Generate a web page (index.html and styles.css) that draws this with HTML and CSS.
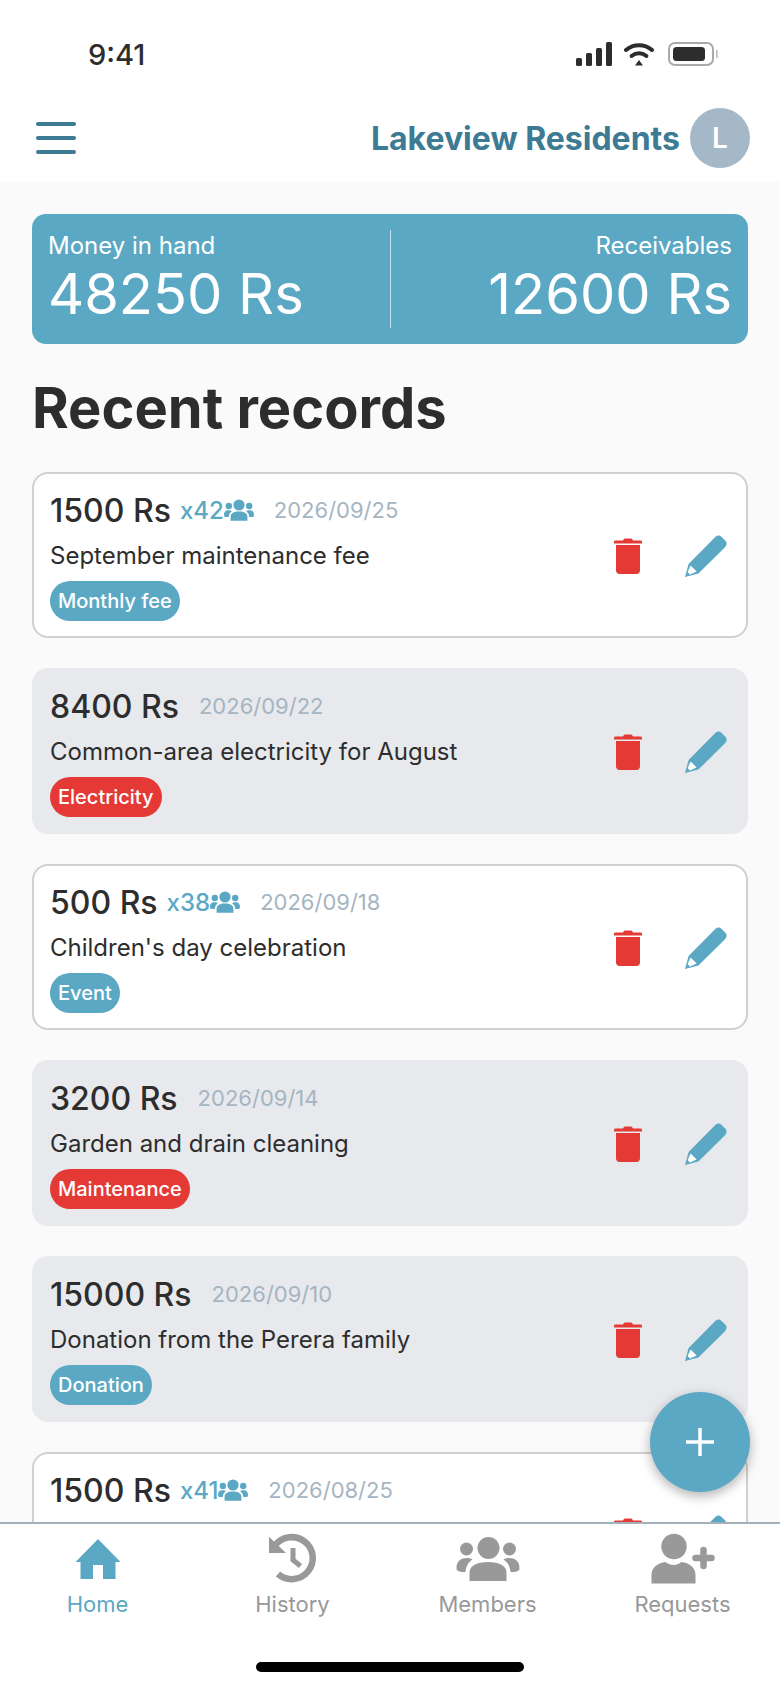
FILE: index.html
```html
<!DOCTYPE html>
<html lang="en">
<head>
    <meta charset="UTF-8">
    <meta name="viewport" content="width=device-width, initial-scale=1.0">
    <title>Lakeview Residents - Home</title>
    <link rel="stylesheet" href="styles.css">
</head>
<body>

    <!-- Shared icons -->
    <svg class="icon-defs" aria-hidden="true">
        <symbol id="i-trash" viewBox="0 0 28 36">
            <path d="M9 2.5 C9.4 1 10.5 0.4 11.5 0.4 H16.5 C17.5 0.4 18.6 1 19 2.5 H26.5 C27.5 2.5 28 3.2 28 4 V5.6 H0 V4 C0 3.2 0.5 2.5 1.5 2.5 Z"/>
            <path d="M2 7 H26 V32 C26 34.4 24.6 36 22.4 36 H5.6 C3.4 36 2 34.4 2 32 Z"/>
        </symbol>
        <symbol id="i-pencil" viewBox="0 0 44 44">
            <path d="M1 43 L4.6 30 L31 3.2 C33 1.2 35.6 1 37.6 3 L41.2 6.6 C43.2 8.6 43 11.2 41 13.2 L14.4 39.6 Z"/>
            <path class="pencil-tip" d="M3.6 38 L6.6 31.4 L12.6 37.4 L6 40.4 Z"/>
        </symbol>
        <symbol id="i-users" viewBox="0 0 30 22">
            <circle cx="15" cy="6" r="5.6"/>
            <circle cx="4.8" cy="7" r="3.2"/>
            <circle cx="25.2" cy="7" r="3.2"/>
            <path d="M6.6 21.8 V18 C6.6 14.6 9.6 12.6 15 12.6 C20.4 12.6 23.4 14.6 23.4 18 V21.8 Z"/>
            <path d="M0 16 C0 12.6 2 11.2 4.6 11.2 C6 11.2 7 11.6 7.8 12.2 C5.8 13.6 4.8 15.6 4.8 18 H1.6 C0.6 18 0 17.2 0 16 Z"/>
            <path d="M30 16 C30 12.6 28 11.2 25.4 11.2 C24 11.2 23 11.6 22.2 12.2 C24.2 13.6 25.2 15.6 25.2 18 H28.4 C29.4 18 30 17.2 30 16 Z"/>
        </symbol>
    </svg>

    <div class="phone">

        <!-- Status bar -->
        <div class="status-bar">
            <span class="status-time">9:41</span>
            <div class="status-icons">
                <svg class="status-signal" width="36" height="24" viewBox="0 0 36 24">
                    <rect x="0" y="16" width="6" height="8" rx="1.5"/>
                    <rect x="10" y="11" width="6" height="13" rx="1.5"/>
                    <rect x="20" y="6" width="6" height="18" rx="1.5"/>
                    <rect x="30" y="0" width="6" height="24" rx="1.5"/>
                </svg>
                <svg class="status-wifi" width="30" height="24" viewBox="0 0 30 24">
                    <path d="M2 8 C9.5 1.6 20.5 1.6 28 8" />
                    <path d="M7.6 14 C12 10.4 18 10.4 22.4 14" />
                    <path class="wifi-dot" d="M15 18 L19 23.6 H11 Z"/>
                </svg>
                <svg class="status-battery" width="50" height="24" viewBox="0 0 50 24">
                    <rect class="battery-case" x="1" y="1" width="44" height="22" rx="6"/>
                    <rect x="5" y="5" width="32" height="14" rx="3.5"/>
                    <rect class="battery-cap" x="48" y="8" width="1.6" height="8"/>
                </svg>
            </div>
        </div>

        <!-- Navigation Bar -->
        <header class="app-bar">
            <button class="menu-button" aria-label="Menu">
                <span></span><span></span><span></span>
            </button>
            <div class="group-info">
                <span class="group-name">Lakeview Residents</span>
                <span class="group-avatar">L</span>
            </div>
        </header>

        <main class="content">
            <section class="summary">
                <div class="summary-col">
                    <span class="summary-label">Money in hand</span>
                    <span class="summary-value">48250 Rs</span>
                </div>
                <div class="summary-col summary-right">
                    <span class="summary-label">Receivables</span>
                    <span class="summary-value">12600 Rs</span>
                </div>
            </section>

            <h1 class="section-title">Recent records</h1>

            <div class="records">
                <article class="record">
                    <div class="record-info">
                        <div class="record-head">
                            <span class="record-amount">1500 Rs</span>
                            <span class="record-count">x42<svg class="users-icon"><use href="#i-users"/></svg></span>
                            <span class="record-date">2026/09/25</span>
                        </div>
                        <p class="record-desc">September maintenance fee</p>
                        <span class="tag">Monthly fee</span>
                    </div>
                    <div class="record-actions">
                        <svg class="trash-icon"><use href="#i-trash"/></svg>
                        <svg class="pencil-icon"><use href="#i-pencil"/></svg>
                    </div>
                </article>

                <article class="record record-shared">
                    <div class="record-info">
                        <div class="record-head">
                            <span class="record-amount">8400 Rs</span>
                            <span class="record-date">2026/09/22</span>
                        </div>
                        <p class="record-desc">Common-area electricity for August</p>
                        <span class="tag tag-red">Electricity</span>
                    </div>
                    <div class="record-actions">
                        <svg class="trash-icon"><use href="#i-trash"/></svg>
                        <svg class="pencil-icon"><use href="#i-pencil"/></svg>
                    </div>
                </article>

                <article class="record">
                    <div class="record-info">
                        <div class="record-head">
                            <span class="record-amount">500 Rs</span>
                            <span class="record-count">x38<svg class="users-icon"><use href="#i-users"/></svg></span>
                            <span class="record-date">2026/09/18</span>
                        </div>
                        <p class="record-desc">Children's day celebration</p>
                        <span class="tag">Event</span>
                    </div>
                    <div class="record-actions">
                        <svg class="trash-icon"><use href="#i-trash"/></svg>
                        <svg class="pencil-icon"><use href="#i-pencil"/></svg>
                    </div>
                </article>

                <article class="record record-shared">
                    <div class="record-info">
                        <div class="record-head">
                            <span class="record-amount">3200 Rs</span>
                            <span class="record-date">2026/09/14</span>
                        </div>
                        <p class="record-desc">Garden and drain cleaning</p>
                        <span class="tag tag-red">Maintenance</span>
                    </div>
                    <div class="record-actions">
                        <svg class="trash-icon"><use href="#i-trash"/></svg>
                        <svg class="pencil-icon"><use href="#i-pencil"/></svg>
                    </div>
                </article>

                <article class="record record-shared">
                    <div class="record-info">
                        <div class="record-head">
                            <span class="record-amount">15000 Rs</span>
                            <span class="record-date">2026/09/10</span>
                        </div>
                        <p class="record-desc">Donation from the Perera family</p>
                        <span class="tag">Donation</span>
                    </div>
                    <div class="record-actions">
                        <svg class="trash-icon"><use href="#i-trash"/></svg>
                        <svg class="pencil-icon"><use href="#i-pencil"/></svg>
                    </div>
                </article>

                <article class="record">
                    <div class="record-info">
                        <div class="record-head">
                            <span class="record-amount">1500 Rs</span>
                            <span class="record-count">x41<svg class="users-icon"><use href="#i-users"/></svg></span>
                            <span class="record-date">2026/08/25</span>
                        </div>
                    </div>
                    <div class="record-actions">
                        <svg class="trash-icon"><use href="#i-trash"/></svg>
                        <svg class="pencil-icon"><use href="#i-pencil"/></svg>
                    </div>
                </article>
            </div>
        </main>

        <button class="fab" aria-label="Add record">
            <svg width="32" height="32" viewBox="0 0 32 32"><path d="M16 2 V30 M2 16 H30"/></svg>
        </button>

        <!-- Bottom tabs -->
        <nav class="tabs">
            <a class="tab tab-active">
                <svg class="tab-icon" viewBox="0 0 52 52">
                    <path d="M26 7 L48.500 30 H43.500 V47 H31 V33 H21 V47 H8.500 V30 H3.500 Z"/>
                </svg>
                <span>Home</span>
            </a>
            <a class="tab">
                <svg class="tab-icon" viewBox="0 0 52 52">
                    <path class="history-ring" d="M8 13.500 A21 21 0 1 1 11 42"/>
                    <path d="M2 4.700 L19 21 H2 Z"/>
                    <path class="history-hand" d="M26 16 V28 L33.500 34"/>
                </svg>
                <span>History</span>
            </a>
            <a class="tab">
                <svg class="tab-icon" viewBox="0 0 64 52">
                    <circle cx="32.500" cy="16" r="11"/>
                    <circle cx="10.500" cy="17" r="6.500"/>
                    <circle cx="53.500" cy="17" r="6.500"/>
                    <path d="M13.500 49 V41 C13.500 33.500 21 30 32 30 C43 30 50.500 33.500 50.500 41 V49 Z"/>
                    <path d="M0.500 36 C0.500 29 5 26 11 26 C13 26 15 26.500 16.500 27.500 C12.500 30 10 34 9.500 40 C5 40 0.500 40 0.500 36 Z"/>
                    <path d="M63.500 36 C63.500 29 59 26 53 26 C51 26 49 26.500 47.500 27.500 C51.500 30 54 34 54.500 40 C59 40 63.500 40 63.500 36 Z"/>
                </svg>
                <span>Members</span>
            </a>
            <a class="tab">
                <svg class="tab-icon" viewBox="0 0 66 52">
                    <circle cx="24" cy="14.500" r="12.700"/>
                    <path d="M1.500 51.500 V43 C1.500 35 8 31 15.500 30 C18 32 21 33 23.500 33 C26 33 29 32 31.500 30 C39 31 45.500 35 45.500 43 V51.500 Z"/>
                    <path class="plus-mark" d="M53.500 18 V34 M45.500 26 H61.500"/>
                </svg>
                <span>Requests</span>
            </a>
        </nav>

        <div class="home-bar-wrap"><div class="home-bar"></div></div>
    </div>

</body>
</html>
```

FILE: styles.css
```css
/* General Styles */
* {
    box-sizing: border-box;
}
body {
    margin: 0;
    font-family: 'Inter', 'Noto Sans', Arial, sans-serif;
    background: #fff;
    color: #2d2d2d;
}
.icon-defs {
    display: none;
}
.phone {
    position: relative;
    width: 780px;
    height: 1688px;
    display: flex;
    flex-direction: column;
    overflow: hidden;
    background: #fff;
}

/* Status bar */
.status-bar {
    height: 92px;
    flex: none;
    display: flex;
    justify-content: space-between;
    align-items: flex-end;
    padding: 0 62px 19px 88px;
}
.status-time {
    font-size: 29px;
    font-weight: 500;
    line-height: 36px;
}
.status-icons {
    display: flex;
    align-items: center;
    gap: 12px;
    padding-bottom: 7px;
}
.status-signal, .status-battery {
    fill: #2d2d2d;
}
.status-battery {
    margin-left: 2px;
}
.status-wifi path {
    fill: none;
    stroke: #2d2d2d;
    stroke-width: 4;
    stroke-linecap: round;
}
.status-wifi .wifi-dot {
    fill: #2d2d2d;
    stroke: none;
}
.status-battery .battery-case {
    fill: none;
    stroke: #aaa;
    stroke-width: 2;
}
.status-battery .battery-cap {
    fill: #bbb;
}

/* App bar */
.app-bar {
    height: 90px;
    flex: none;
    display: flex;
    justify-content: space-between;
    align-items: center;
    padding: 2px 30px 0 36px;
}
.menu-button {
    display: flex;
    flex-direction: column;
    gap: 10px;
    width: 40px;
    padding: 0;
    border: none;
    background: none;
}
.menu-button span {
    height: 4px;
    border-radius: 2px;
    background: #3d7a94;
}
.group-info {
    display: flex;
    align-items: center;
    gap: 10px;
}
.group-name {
    font-size: 32px;
    font-weight: 700;
    color: #3d7a94;
}
.group-avatar {
    width: 60px;
    height: 60px;
    border-radius: 50%;
    background: #a5b8c8;
    color: #fff;
    font-size: 28px;
    font-weight: 600;
    display: flex;
    align-items: center;
    justify-content: center;
}

/* Main content */
.content {
    flex: 1;
    min-height: 0;
    overflow: hidden;
    padding: 32px 32px 0;
    background: #fafafa;
}
.summary {
    height: 130px;
    display: grid;
    grid-template-columns: 1fr 1fr;
    align-items: center;
    padding: 0 16px;
    border-radius: 14px;
    background: #5ba8c4;
    color: #fff;
    position: relative;
}
.summary::after {
    content: '';
    position: absolute;
    left: 358px;
    top: 16px;
    bottom: 16px;
    width: 1px;
    background: #c5e0ea;
}
.summary-col {
    display: flex;
    flex-direction: column;
}
.summary-right {
    align-items: flex-end;
}
.summary-label {
    font-size: 24px;
    line-height: 30px;
}
.summary-value {
    font-size: 56px;
    line-height: 66px;
}
.section-title {
    margin: 31px 0 31px;
    font-size: 56px;
    line-height: 66px;
    font-weight: 700;
}

/* Record cards */
.records {
    display: flex;
    flex-direction: column;
    gap: 30px;
}
.record {
    flex: none;
    height: 166px;
    display: flex;
    justify-content: space-between;
    align-items: center;
    padding: 0 18px 0 16px;
    border: 2px solid #d0d0d0;
    border-radius: 16px;
    background: #fff;
}
.record-shared {
    border-color: #e7e9ed;
    background: #e7e9ed;
}
.record-info {
    align-self: flex-start;
    display: flex;
    flex-direction: column;
    align-items: flex-start;
    padding-top: 18px;
}
.record-head {
    display: flex;
    align-items: center;
    gap: 20px;
    height: 36px;
}
.record-amount {
    font-size: 32px;
    font-weight: 500;
}
.record-count {
    display: flex;
    align-items: center;
    margin-left: -11px;
    font-size: 24px;
    font-weight: 500;
    color: #5ba8c4;
}
.users-icon {
    width: 30px;
    height: 22px;
    fill: #5ba8c4;
}
.record-date {
    font-size: 22px;
    color: #a5b5c2;
}
.record-desc {
    margin: 12px 0 9px;
    font-size: 24px;
    line-height: 32px;
}
.tag {
    height: 40px;
    padding: 0 8px;
    border-radius: 20px;
    background: #5ba8c4;
    color: #fff;
    font-size: 20px;
    font-weight: 500;
    line-height: 40px;
}
.tag-red {
    background: #e53935;
}
.record-actions {
    display: flex;
    align-items: center;
    gap: 42px;
    padding-top: 2px;
}
.trash-icon {
    width: 28px;
    height: 36px;
    fill: #e53935;
}
.pencil-icon {
    width: 44px;
    height: 44px;
    fill: #5ba8c4;
}
.pencil-tip {
    fill: #fff;
}

/* Floating add button */
.fab {
    position: absolute;
    left: 650px;
    top: 1392px;
    width: 100px;
    height: 100px;
    padding: 0;
    border: none;
    border-radius: 50%;
    background: #5ba8c4;
    box-shadow: 0 4px 12px rgba(0, 0, 0, 0.3);
    display: flex;
    align-items: center;
    justify-content: center;
}
.fab path {
    fill: none;
    stroke: #fff;
    stroke-width: 3.5;
}

/* Bottom tabs */
.tabs {
    height: 98px;
    flex: none;
    display: grid;
    grid-template-columns: repeat(4, 1fr);
    border-top: 2px solid #a5b1ba;
    background: #fff;
}
.tab {
    display: flex;
    flex-direction: column;
    align-items: center;
    padding-top: 8px;
    color: #999;
    font-size: 22px;
    line-height: 30px;
    fill: #999;
}
.tab-active {
    color: #5ba8c4;
    fill: #5ba8c4;
}
.tab-icon {
    width: 66px;
    height: 52px;
    margin-bottom: 5px;
}
.history-ring, .history-hand {
    fill: none;
    stroke: #999;
}
.history-ring {
    stroke-width: 6.5;
}
.history-hand {
    stroke-width: 5;
}
.plus-mark {
    fill: none;
    stroke: #999;
    stroke-width: 6.5;
    stroke-linecap: round;
}
.home-bar-wrap {
    height: 68px;
    flex: none;
    padding: 42px 0 0 256px;
    background: #fff;
}
.home-bar {
    width: 268px;
    height: 10px;
    border-radius: 5px;
    background: #000;
}
```
